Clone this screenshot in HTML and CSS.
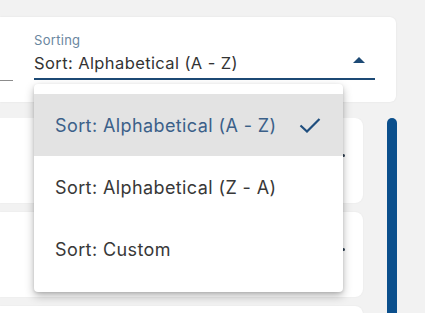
FILE: index.html
```html
<!DOCTYPE html>
<html>
<head>
  <meta charset="UTF-8">
  <title>Sorting</title>
  <link rel="stylesheet" href="styles.css">
</head>
<body>
  <div class="page">
    <div class="filter-card">
      <div class="stub-field"></div>
      <div class="sort-field">
        <div class="sort-label">Sorting</div>
        <div class="sort-value">
          <span>Sort: Alphabetical (A - Z)</span>
          <span class="arrow-up"></span>
        </div>
      </div>
    </div>

    <div class="content">
      <div class="cards">
        <div class="card"><span class="card-dot"></span></div>
        <div class="card"><span class="card-dot"></span></div>
        <div class="card"><span class="card-dot"></span></div>
      </div>
      <div class="scrollbar"></div>
    </div>

    <!-- open select menu -->
    <div class="sort-menu">
      <div class="sort-option selected">
        <span>Sort: Alphabetical (A - Z)</span>
        <svg class="check" width="22" height="16" viewBox="0 0 22 16">
          <path d="M1.5 8.5 L8 14.5 L20.5 2" fill="none" stroke="currentColor" stroke-width="2.2"/>
        </svg>
      </div>
      <div class="sort-option">Sort: Alphabetical (Z - A)</div>
      <div class="sort-option">Sort: Custom</div>
    </div>
  </div>
</body>
</html>
```

FILE: styles.css
```css
body {
  margin: 0;
  width: 425px;
  height: 313px;
  overflow: hidden;
  background-color: #f2f2f2;
  font-family: Inter, "Open Sans", sans-serif;
}
.page {
  position: relative;
  height: 313px;
  overflow: hidden;
  padding-top: 17px;
  box-sizing: border-box;
}

/* 顶部筛选卡片 */
.filter-card {
  width: 396px;
  height: 85px;
  box-sizing: border-box;
  background-color: #fff;
  border-radius: 0 6px 6px 0;
  box-shadow: 0 0 2px rgba(0, 0, 0, 0.08);
  display: flex;
  align-items: flex-start;
}
.stub-field {
  width: 13px;
  height: 1px;
  margin-top: 63px;
  background-color: #8c8c8c;
}
.sort-field {
  width: 341px;
  margin-left: 21px;
  padding-top: 15px;
}
.sort-label {
  font-size: 13px;
  line-height: 16px;
  letter-spacing: 0.3px;
  color: #6a86a0;
}
.sort-value {
  display: flex;
  justify-content: space-between;
  align-items: center;
  height: 30px;
  font-size: 16.5px;
  letter-spacing: 0.4px;
  color: #333;
  border-bottom: 2px solid #1d4a75;
}
.arrow-up {
  width: 0;
  height: 0;
  margin-right: 10px;
  margin-bottom: 6px;
  border-left: 6px solid transparent;
  border-right: 6px solid transparent;
  border-bottom: 6px solid #1d4a75;
}

/* 列表 */
.content {
  display: flex;
  gap: 24px;
  height: 195px;
  overflow: hidden;
  margin-top: 16px;
}
.cards {
  display: flex;
  flex-direction: column;
  gap: 9px;
}
.card {
  flex-shrink: 0;
  width: 363px;
  height: 85px;
  background-color: #fff;
  border-radius: 0 8px 8px 0;
  box-shadow: 0 0 2px rgba(0, 0, 0, 0.06);
  display: flex;
  justify-content: flex-end;
}
.card-dot {
  width: 3px;
  height: 3px;
  margin: 36px 18px 0 0;
  border-radius: 50%;
  background-color: #2d3e50;
}
.scrollbar {
  width: 10px;
  height: 195px;
  background-color: #0b4f8c;
  border-radius: 5px 5px 0 0;
}

/* 下拉菜单 */
.sort-menu {
  position: absolute;
  left: 34px;
  top: 84px;
  width: 309px;
  padding: 10px 0 12px;
  background-color: #fff;
  border-radius: 4px;
  box-shadow: 0 4px 10px rgba(0, 0, 0, 0.28), 0 1px 3px rgba(0, 0, 0, 0.12);
}
.sort-option {
  height: 62px;
  display: flex;
  align-items: center;
  justify-content: space-between;
  padding: 0 22px 0 21px;
  font-size: 18px;
  letter-spacing: 0.4px;
  color: #383838;
}
.sort-option.selected {
  background-color: #e3e3e3;
  color: #3b6089;
}
.check {
  color: #1f4e7e;
}
```
